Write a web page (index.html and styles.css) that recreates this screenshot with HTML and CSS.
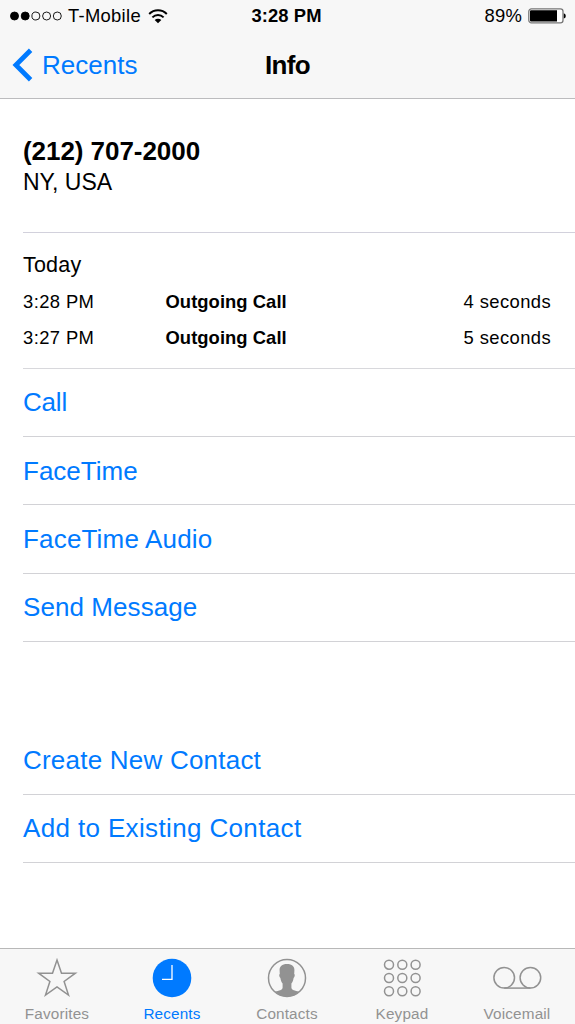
FILE: index.html
```html
<!DOCTYPE html>
<html lang="en">
<head>
<meta charset="utf-8">
<title>Info</title>
<link rel="stylesheet" href="styles.css">
</head>
<body>
<div class="screen">
  <header class="top">
    <div class="status">
      <div class="status-left">
        <svg class="signal" width="52" height="10" viewBox="0 0 52 10"><g stroke="#000" stroke-width="0.9"><circle cx="4.5" cy="5" r="4"/><circle cx="15.2" cy="5" r="4"/><g fill="none"><circle cx="25.9" cy="5" r="4"/><circle cx="36.6" cy="5" r="4"/><circle cx="47.3" cy="5" r="4"/></g></g></svg>
        <span class="carrier">T-Mobile</span>
        <svg class="wifi" width="20" height="15" viewBox="0 0 20 15"><g fill="none" stroke="#000" stroke-width="2"><path d="M1.2 5a12.4 12.4 0 0 1 17.6 0"/><path d="M4.4 8.4a8 8 0 0 1 11.2 0"/></g><path d="M6.7 11a4.7 4.7 0 0 1 6.6 0L10 14.2z"/></svg>
      </div>
      <div class="time">3:28 PM</div>
      <div class="status-right">
        <span class="percent">89%</span>
        <svg class="battery" width="38" height="16" viewBox="0 0 38 16"><rect x=".8" y=".9" width="34.2" height="14" rx="2.6" fill="#fff" stroke="#777" stroke-width="1.3"/><path d="M3 2.2h26v11.4H3a1 1 0 0 1-1-1V3.2a1 1 0 0 1 1-1z"/><path d="M35.8 5.2q2 .5 2 2.7t-2 2.7z"/></svg>
      </div>
    </div>
    <nav class="nav">
      <a class="back"><svg width="21" height="34" viewBox="0 0 21 34"><path d="M18.6 2.3 3.9 17 18.6 31.7" fill="none" stroke="#007aff" stroke-width="4.8"/></svg><span>Recents</span></a>
      <h1 class="title">Info</h1>
    </nav>
  </header>

  <main class="content">
    <section class="caller">
      <div class="number">(212) 707-2000</div>
      <div class="place">NY, USA</div>
    </section>
    <section class="log">
      <div class="day">Today</div>
      <div class="entry"><span class="at">3:28 PM</span><span class="kind">Outgoing Call</span><span class="length">4 seconds</span></div>
      <div class="entry"><span class="at">3:27 PM</span><span class="kind">Outgoing Call</span><span class="length">5 seconds</span></div>
    </section>
    <section class="actions">
      <a class="action call">Call</a>
      <a class="action">FaceTime</a>
      <a class="action audio">FaceTime Audio</a>
      <a class="action message">Send Message</a>
    </section>
    <section class="actions contact-actions">
      <a class="action create">Create New Contact</a>
      <a class="action existing">Add to Existing Contact</a>
    </section>
  </main>

  <footer class="tabs">
    <a class="tab"><svg width="42" height="42" viewBox="0 0 42 42"><path d="M21 3 25.5 16.2 39.4 16.2 28.1 24.5 32.5 38 21 29.8 9.5 38 13.9 24.5 2.6 16.2 16.5 16.2z" fill="none" stroke="#929292" stroke-width="1.5"/></svg><span>Favorites</span></a>
    <a class="tab active"><svg width="42" height="42" viewBox="0 0 42 42"><circle cx="21" cy="21" r="19.3" fill="#007aff"/><path d="M21 8v14.4H11" fill="none" stroke="#fff" stroke-width="1.3"/></svg><span>Recents</span></a>
    <a class="tab"><svg width="42" height="42" viewBox="0 0 42 42"><circle cx="21" cy="21" r="18.5" fill="none" stroke="#929292" stroke-width="1.5"/><path d="M21 7.1c5 0 7.6 2.5 7.4 6.5l-.2 3.3c1 .4.6 2.7-.6 4-.4 2.7-1.1 4.3-2.2 5.5v4.3c.3 2.3 3.4 2.7 7.7 4.1-6.1 6.5-18.1 6.5-24.2 0 4.3-1.4 7.4-1.8 7.7-4.1v-4.3c-1.1-1.2-1.8-2.8-2.2-5.5-1.2-1.3-1.6-3.6-.6-4l-.2-3.3c-.2-4 2.4-6.5 7.4-6.5z" fill="#929292"/></svg><span>Contacts</span></a>
    <a class="tab"><svg width="42" height="42" viewBox="0 0 42 42"><g fill="none" stroke="#929292" stroke-width="1.5"><circle cx="8" cy="7.7" r="4.5"/><circle cx="21.3" cy="7.7" r="4.5"/><circle cx="34.6" cy="7.7" r="4.5"/><circle cx="8" cy="21" r="4.5"/><circle cx="21.3" cy="21" r="4.5"/><circle cx="34.6" cy="21" r="4.5"/><circle cx="8" cy="34.3" r="4.5"/><circle cx="21.3" cy="34.3" r="4.5"/><circle cx="34.6" cy="34.3" r="4.5"/></g></svg><span>Keypad</span></a>
    <a class="tab"><svg width="50" height="42" viewBox="0 0 50 42"><g fill="none" stroke="#929292" stroke-width="1.5"><circle cx="12.2" cy="20.8" r="10.3"/><circle cx="38.4" cy="20.8" r="10.3"/><path d="M12.2 31.1h26.2"/></g></svg><span>Voicemail</span></a>
  </footer>
</div>
</body>
</html>
```
FILE: styles.css
```css
* { box-sizing: border-box; }
body { margin: 0; background: #fff; color: #000; font-family: "Liberation Sans", Arial, sans-serif; }
svg { display: block; flex: none; }
.screen { width: 575px; height: 1024px; display: flex; flex-direction: column; overflow: hidden; background: #fff; }

.top { height: 99px; background: #f7f7f7; border-bottom: 1px solid #bcbcbe; }
.status { height: 32px; display: grid; grid-template-columns: 1fr auto 1fr; align-items: center; padding: 0 9px 0 10px; font-size: 18.4px; line-height: 32px; white-space: nowrap; }
.status-left, .status-right { display: flex; align-items: center; }
.status-right { justify-content: flex-end; gap: 6px; }
.carrier { margin-left: 6px; letter-spacing: 0.3px; }
.wifi { margin-left: 7px; }
.time { font-weight: bold; letter-spacing: 0.1px; margin-right: 3px; }
.percent { letter-spacing: 0.2px; }

.nav { height: 66px; display: grid; grid-template-columns: 1fr auto 1fr; align-items: center; padding: 0 12px; font-size: 26px; line-height: 66px; }
.back { display: flex; align-items: center; gap: 9px; color: #007aff; }
.title { margin: 0; font-size: 26px; font-weight: bold; letter-spacing: -0.6px; }

.content { flex: 1; padding-left: 23px; }
.caller { height: 134px; padding-top: 37px; border-bottom: 1px solid #d2d1dc; }
.number { font-size: 26px; font-weight: bold; line-height: 30px; letter-spacing: -0.05px; }
.place { font-size: 23px; line-height: 33px; }
.log { height: 136px; padding-top: 14px; border-bottom: 1px solid #d8d8dc; }
.day { font-size: 21.5px; line-height: 36px; margin-bottom: 1px; letter-spacing: 0.2px; }
.entry { display: grid; grid-template-columns: 142.5px 1fr auto; padding-right: 24px; font-size: 18.4px; line-height: 36px; letter-spacing: 0.4px; }
.kind { font-weight: bold; letter-spacing: 0.05px; }

.actions { display: grid; grid-auto-rows: 68.2px; }
.action { border-bottom: 1px solid #d2d2d6; color: #007aff; font-size: 26px; line-height: 68.5px; }
.call { letter-spacing: -0.2px; line-height: 67px; }
.audio { letter-spacing: 0.18px; }
.message { letter-spacing: 0.08px; line-height: 67px; }
.create { letter-spacing: 0.22px; line-height: 67px; }
.existing { letter-spacing: 0.36px; line-height: 67px; }
.contact-actions { padding-top: 84.8px; }

.tabs { height: 76px; display: grid; grid-template-columns: repeat(5, 1fr); background: #f7f7f7; border-top: 1px solid #b8b8b8; }
.tab { display: flex; flex-direction: column; align-items: center; padding: 8px 1px 0 0; color: #929292; font-size: 15.3px; line-height: 29px; letter-spacing: 0.15px; }
.active { color: #007aff; }
```
